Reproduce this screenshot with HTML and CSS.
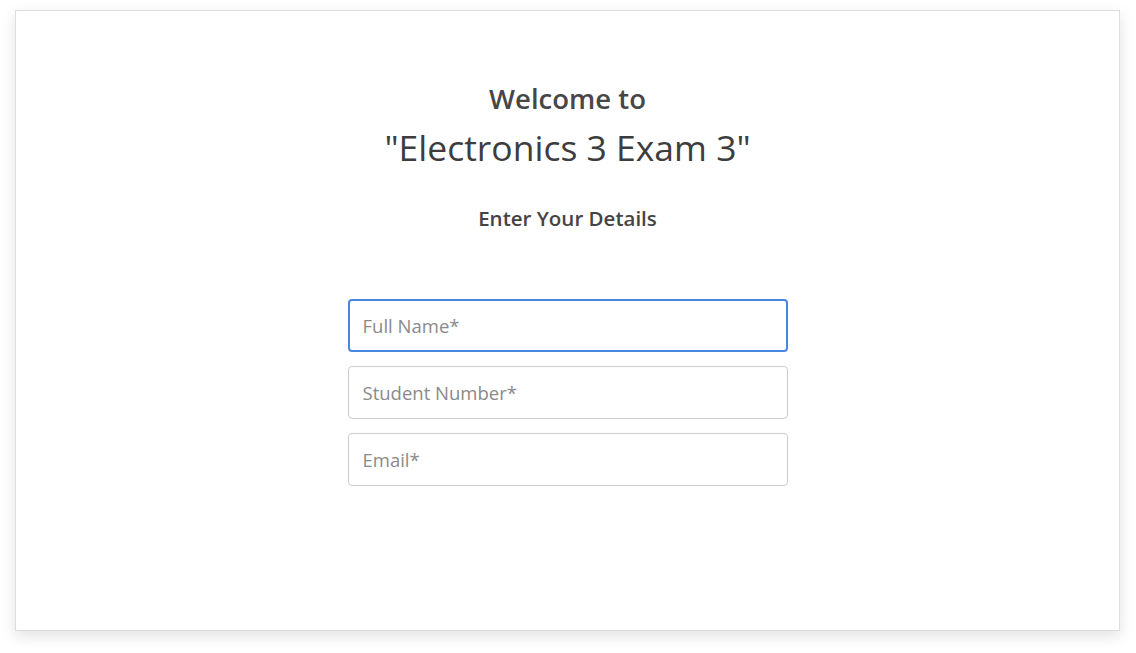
FILE: index.html
```html
<!DOCTYPE html>
<html>
<head>
<meta charset="utf-8">
<link rel="stylesheet" href="styles.css">
</head>
<body>
<div class="card">
  <div class="welcome">Welcome to</div>
  <h1 class="title">"Electronics 3 Exam 3"</h1>
  <div class="subtitle">Enter Your Details</div>
  <form class="form">
    <input class="field" type="text" placeholder="Full Name*" autofocus>
    <input class="field" type="text" placeholder="Student Number*">
    <input class="field" type="email" placeholder="Email*">
  </form>
</div>
</body>
</html>
```
FILE: styles.css
```css
html, body {
  margin: 0;
  background: #ffffff;
}
body {
  padding: 10px 16px 22px 15px;
  font-family: "Open Sans", "Liberation Sans", sans-serif;
  color: #444444;
}
.card {
  height: 621px;
  box-sizing: border-box;
  border: 1px solid #dedede;
  background: #fff;
  box-shadow: 0 5px 14px rgba(0,0,0,0.12);
  display: flex;
  flex-direction: column;
  align-items: center;
  padding-top: 70px;
}
.welcome {
  font-size: 27.5px;
  font-weight: 600;
  line-height: 36px;
  color: #474747;
}
.title {
  margin: 7px 0 0;
  font-size: 35.5px;
  font-weight: 400;
  line-height: 46px;
  color: #3d3d3d;
}
.subtitle {
  margin-top: 34px;
  font-size: 20.5px;
  font-weight: 600;
  line-height: 28px;
}
.form {
  margin-top: 67px;
  display: flex;
  flex-direction: column;
  gap: 14px;
  width: 440px;
}
.field {
  box-sizing: border-box;
  width: 440px;
  height: 53px;
  border: 1px solid #cccccc;
  border-radius: 4px;
  padding: 0 14px;
  font-family: "Open Sans", "Liberation Sans", sans-serif;
  font-size: 18.5px;
  color: #444;
  outline: none;
  background: #fff;
}
.field::placeholder {
  color: #8a8a8a;
}
.field:focus {
  border: 2px solid #4a86df;
  padding: 0 13px;
}
```
